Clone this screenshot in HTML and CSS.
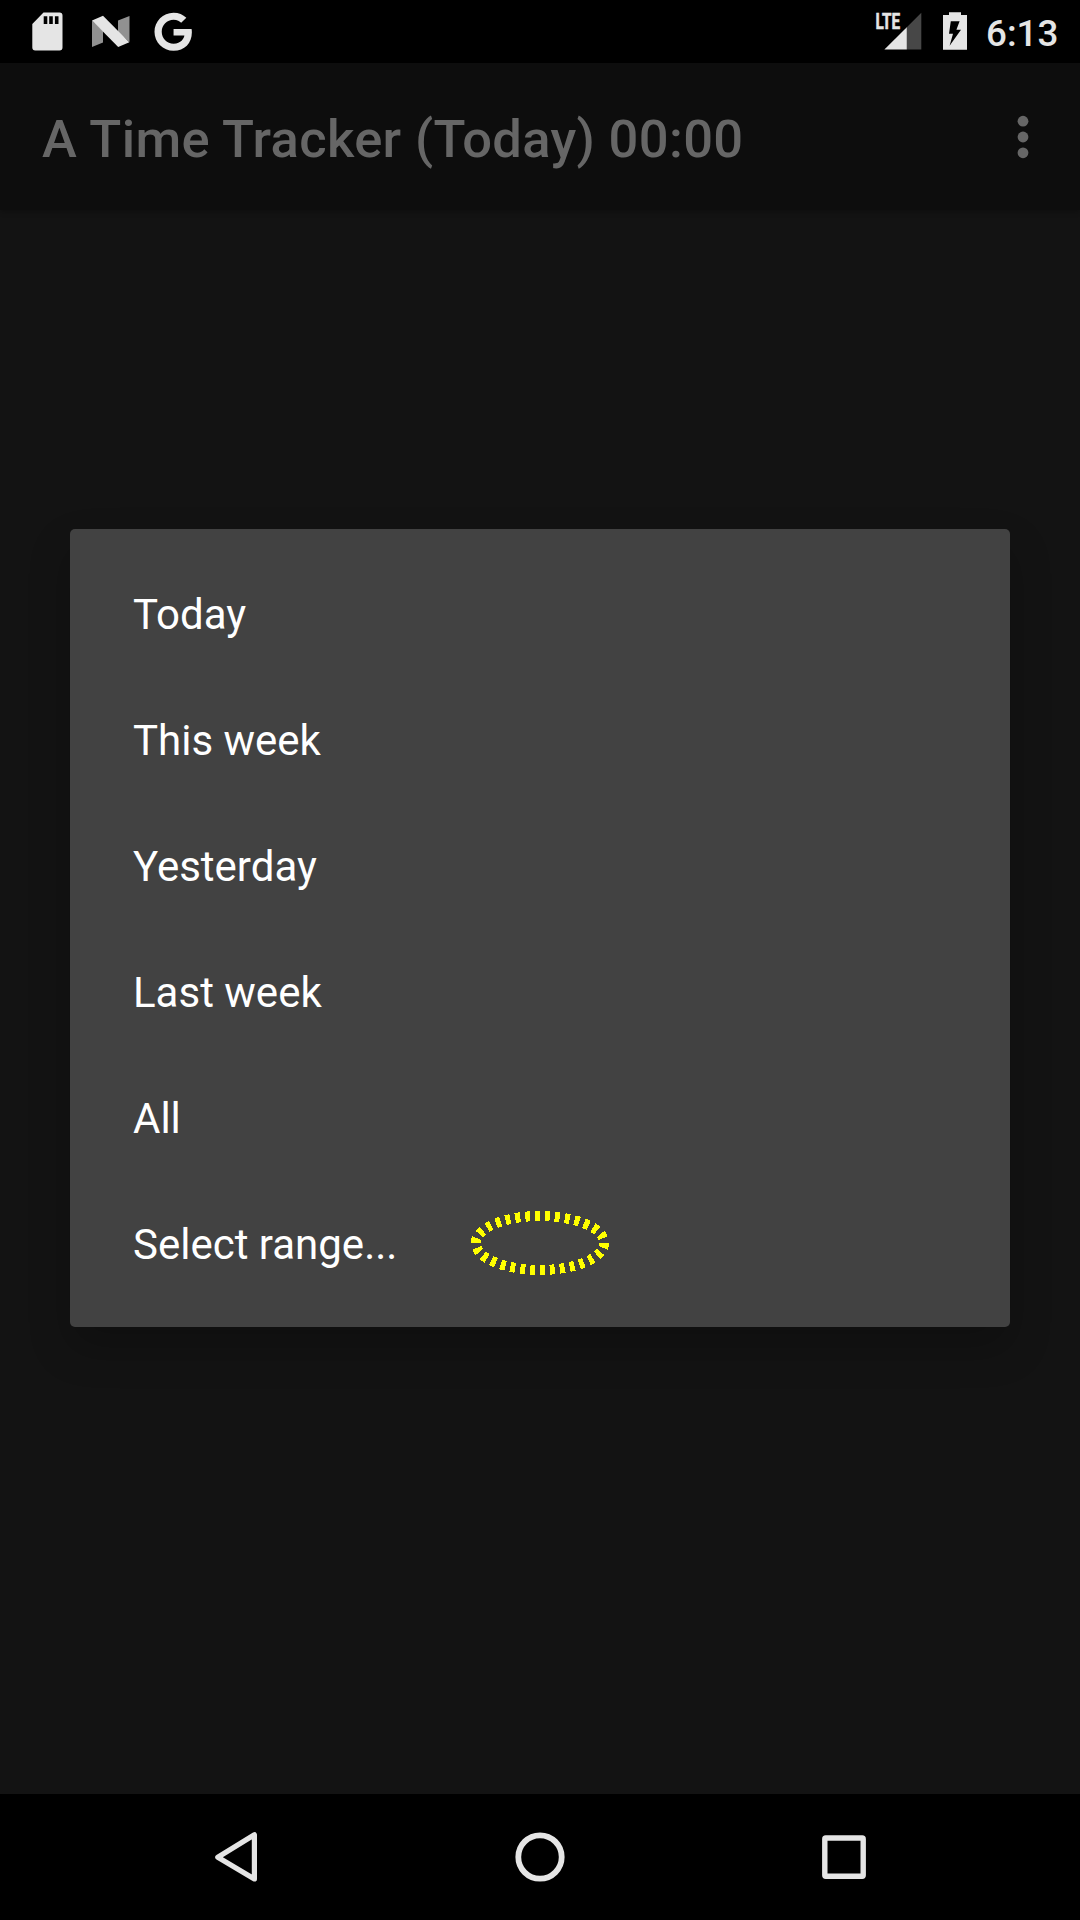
FILE: index.html
```html
<!DOCTYPE html>
<html lang="en">
<head>
<meta charset="utf-8">
<title>A Time Tracker</title>
<link rel="stylesheet" href="styles.css">
</head>
<body>
<div class="screen">
  <header class="status-bar">
    <svg class="status-icons" width="240" height="63" viewBox="0 0 240 63">
      <path fill="#e5e5e5" fill-rule="evenodd" d="M43.5 12.6H59.5a3 3 0 0 1 3 3V47.4a3 3 0 0 1-3 3H35.3a3 3 0 0 1-3-3V24zM43.7 16.3V24h3.6V16.3zM49.2 16.3V24h3.6V16.3zM54.9 16.3V24h3.6V16.3z"/>
      <path fill="#919191" d="M92 20.5L103 31V42.5L92 47zM118 20.5L129.5 16V42L118 32z"/>
      <path fill="#e5e5e5" d="M92 20.5L103 15.8L129.3 42.2L118.2 47z"/>
      <path fill="#e5e5e5" transform="translate(154.1 12.7) scale(1.59)" d="M12.24 10.285V14.4h6.806c-.275 1.765-2.056 5.174-6.806 5.174-4.095 0-7.439-3.389-7.439-7.574s3.345-7.574 7.439-7.574c2.33 0 3.891.989 4.785 1.849l3.254-3.138C18.189 1.186 15.479 0 12.24 0c-6.635 0-12 5.365-12 12s5.365 12 12 12c6.926 0 11.52-4.869 11.52-11.726 0-.788-.085-1.39-.189-1.989z"/>
    </svg>
    <div class="status-right">
      <svg width="112" height="63" viewBox="870 0 112 63">
        <path fill="#474747" d="M921.3 12.7V49.6H906.8V27.2z"/>
        <path fill="#e5e5e5" d="M906.8 27.2V49.6H884.4z"/>
        <text class="lte" x="875.5" y="29.2" textLength="24.6" lengthAdjust="spacingAndGlyphs">LTE</text>
        <path fill="#e5e5e5" fill-rule="evenodd" d="M949 12.2H961V15H967V49.8H943V15H949zM950.8 21.2L949 33.8H953L949.6 45.8L961 29.8H956.4L959.6 21.2z"/>
      </svg>
      <span class="clock">6:13</span>
    </div>
  </header>

  <div class="toolbar">
    <h1 class="title">A Time Tracker (Today) 00:00</h1>
    <svg width="12" height="44" viewBox="0 0 12 44" fill="#666">
      <circle cx="6" cy="6.2" r="5.4"/><circle cx="6" cy="22" r="5.4"/><circle cx="6" cy="37.8" r="5.4"/>
    </svg>
  </div>

  <main class="content"></main>

  <nav class="nav-bar">
    <svg width="1080" height="126" viewBox="0 1794 1080 126" fill="none" stroke="#e5e5e5" stroke-linejoin="round">
      <path stroke-width="5.2" d="M217.8 1857.2L254.4 1834.8V1879z"/>
      <circle stroke-width="5.8" cx="540" cy="1857" r="21.7"/>
      <rect stroke-width="5.4" x="824.8" y="1838" width="38.4" height="38.2" rx="1"/>
    </svg>
  </nav>

  <div class="overlay">
    <ul class="dialog">
      <li>Today</li>
      <li>This week</li>
      <li>Yesterday</li>
      <li>Last week</li>
      <li>All</li>
      <li>Select range...
        <svg class="marker" width="150" height="76" viewBox="465 1205 150 76">
          <ellipse cx="540" cy="1243" rx="64.2" ry="27" pathLength="300"/>
        </svg>
      </li>
    </ul>
  </div>
</div>
</body>
</html>
```
FILE: styles.css
```css
* { box-sizing: border-box; }

body {
  margin: 0;
  background: #131313;
  font-family: Roboto, sans-serif;
}

.screen {
  position: relative;
  display: flex;
  flex-direction: column;
  width: 1080px;
  height: 1920px;
  overflow: hidden;
  background: #131313;
}

svg { display: block; flex: none; }

.status-bar {
  display: flex;
  justify-content: space-between;
  height: 63px;
  background: #000;
}

.status-right {
  display: flex;
  padding-right: 21px;
}

.lte {
  fill: #e5e5e5;
  stroke: #e5e5e5;
  stroke-width: .6px;
  font-size: 21.8px;
  font-weight: 700;
}

.clock {
  width: 77px;
  padding-left: 4px;
  color: #e5e5e5;
  font-size: 36.75px;
  font-weight: 500;
  line-height: 67px;
}

.toolbar {
  display: flex;
  align-items: center;
  justify-content: space-between;
  height: 147px;
  padding: 0 51.5px 0 42px;
  background: #0d0d0d;
  box-shadow: 0 2px 5px rgba(0, 0, 0, .25);
}

.title {
  margin: 0;
  padding-top: 4px;
  color: #666;
  font-size: 52.5px;
  font-weight: 500;
  letter-spacing: .34px;
  line-height: 62px;
}

.content { flex: 1; }

.nav-bar {
  height: 126px;
  background: #000;
}

/* Modal layer between the two system bars */
.overlay {
  position: absolute;
  inset: 63px 0 126px;
  display: flex;
  align-items: flex-start;
  justify-content: center;
  padding-top: 466px;
}

.dialog {
  width: 940px;
  margin: 0;
  padding: 21px 0;
  border-radius: 5px;
  background: #424242;
  box-shadow: 0 20px 42px rgba(0, 0, 0, .22);
  list-style: none;
}

.dialog li {
  position: relative;
  height: 126px;
  padding-left: 63px;
  color: #fff;
  font-size: 42px;
  line-height: 130px;
}

/* Touch highlight lying over the tapped row */
.marker {
  position: absolute;
  left: 395px;
  top: 25px;
  fill: none;
  stroke: #ff0;
  stroke-width: 10;
  stroke-dasharray: 5 5;
  shape-rendering: crispEdges;
}
```
